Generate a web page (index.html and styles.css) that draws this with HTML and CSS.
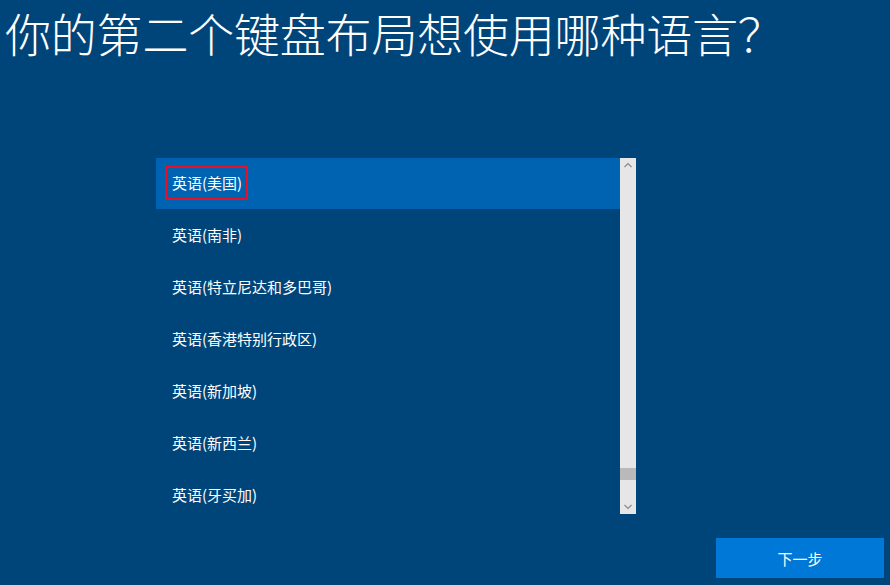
FILE: index.html
```html
<!DOCTYPE html>
<html lang="zh-CN">
<head>
<meta charset="utf-8">
<title>键盘布局</title>
<link rel="stylesheet" href="styles.css">
</head>
<body>
<div class="page">
  <h1 class="title">你的第二个键盘布局想使用哪种语言？</h1>
  <div class="list-wrap">
    <ul class="list">
      <li class="item selected"><span class="focus">英语(美国)</span></li>
      <li class="item"><span class="label">英语(南非)</span></li>
      <li class="item"><span class="label">英语(特立尼达和多巴哥)</span></li>
      <li class="item"><span class="label">英语(香港特别行政区)</span></li>
      <li class="item"><span class="label">英语(新加坡)</span></li>
      <li class="item"><span class="label">英语(新西兰)</span></li>
      <li class="item"><span class="label">英语(牙买加)</span></li>
    </ul>
    <div class="scrollbar">
      <svg class="arrow" width="16" height="14" viewBox="0 0 16 14"><path d="M4.5 9 L8 5.5 L11.5 9" fill="none" stroke="#8a8a8a" stroke-width="1.2"/></svg>
      <div class="track"><div class="thumb"></div></div>
      <svg class="arrow" width="16" height="14" viewBox="0 0 16 14"><path d="M4.5 5 L8 8.5 L11.5 5" fill="none" stroke="#8a8a8a" stroke-width="1.2"/></svg>
    </div>
  </div>
  <div class="footer">
    <button class="next">下一步</button>
  </div>
</div>
</body>
</html>
```
FILE: styles.css
```css
html, body {
  margin: 0;
  padding: 0;
  background: #00457a;
  width: 890px;
  height: 585px;
  overflow: hidden;
}
.page {
  font-family: "Noto Sans CJK SC", "Noto Sans", sans-serif;
  color: #ffffff;
  display: flex;
  flex-direction: column;
  height: 585px;
}
.title {
  margin: 0;
  padding: 1px 0 0 5px;
  font-size: 46px;
  font-weight: 300;
  line-height: 63px;
  letter-spacing: -0.2px;
  white-space: nowrap;
}
.list-wrap {
  margin: 94px 0 0 156px;
  display: flex;
  width: 480px;
  height: 356px;
}
.list {
  list-style: none;
  margin: 0;
  padding: 0;
  width: 464px;
  overflow: hidden;
}
.item {
  height: 52px;
  display: flex;
  align-items: center;
  padding-left: 16px;
  padding-bottom: 3px;
  box-sizing: border-box;
  font-size: 15px;
  white-space: nowrap;
}
.item.selected {
  background: #0063b1;
  height: 51px;
  margin-bottom: 1px;
  padding-left: 9px;
  padding-bottom: 1px;
}
.focus {
  border: 2px solid #e81123;
  padding: 0 0 2px 5px;
  height: 34px;
  box-sizing: border-box;
  display: flex;
  align-items: center;
  width: 83px;
  white-space: nowrap;
}
.scrollbar {
  width: 16px;
  background: #e6e6e6;
  display: flex;
  flex-direction: column;
}
.arrow {
  display: block;
}
.track {
  flex: 1;
  display: flex;
  flex-direction: column;
  justify-content: flex-end;
  padding-bottom: 20px;
}
.thumb {
  height: 12px;
  background: #b9b9b9;
}
.footer {
  display: flex;
  justify-content: flex-end;
  padding: 24px 6px 0 0;
}
.next {
  width: 168px;
  height: 40px;
  border: none;
  background: #0078d7;
  color: #ffffff;
  font-family: "Noto Sans CJK SC", sans-serif;
  font-size: 15px;
  padding: 0;
}
```
